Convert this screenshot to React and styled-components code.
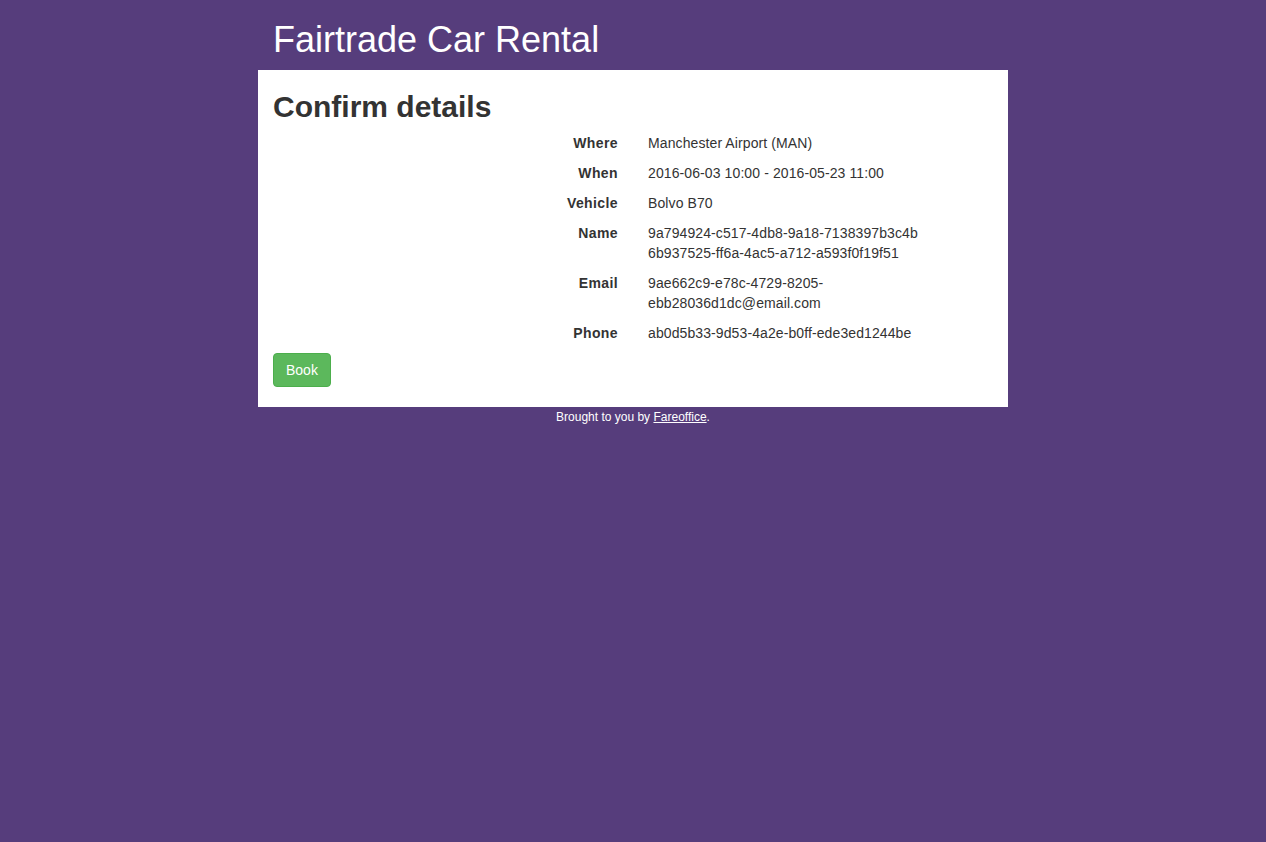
import styled, { createGlobalStyle } from "styled-components";

const GlobalStyle = createGlobalStyle`
  html, body {
    margin: 0;
    padding: 0;
    background-color: #563d7c;
    font-family: "Liberation Sans", Arial, Helvetica, sans-serif;
    font-size: 14px;
    line-height: 1.42857143;
    color: #333;
  }
  * {
    box-sizing: border-box;
  }
`;

const Container = styled.div`
  width: 750px;
  margin: 0 auto;
`;

const Header = styled.header`
  padding: 0 15px;
`;

const SiteTitle = styled.h1`
  margin: 20px 0 10px;
  font-size: 36px;
  font-weight: 400;
  line-height: 1.1;
  color: #fff;
`;

const Panel = styled.main`
  background-color: #fff;
  padding: 0 15px 20px;
`;

const PageTitle = styled.h2`
  margin: 0 0 10px;
  padding-top: 20px;
  font-size: 30px;
  font-weight: 700;
  line-height: 1.1;
  color: #333;
`;

const Details = styled.dl`
  display: grid;
  grid-template-columns: 1fr 1fr;
  column-gap: 30px;
  row-gap: 10px;
  margin: 0 0 10px;
`;

const Term = styled.dt`
  font-weight: 700;
  text-align: right;
  letter-spacing: 0.4px;
`;

const Value = styled.dd`
  margin: 0;
  padding-right: 10px;
  letter-spacing: 0.1px;
  word-wrap: break-word;
`;

const Button = styled.button`
  display: inline-block;
  padding: 6px 12px;
  font-family: inherit;
  font-size: 14px;
  line-height: 1.42857143;
  color: #fff;
  background-color: #5cb85c;
  border: 1px solid #4cae4c;
  border-radius: 4px;
  cursor: pointer;
`;

const Footer = styled.footer`
  text-align: center;
  font-size: 12px;
  line-height: 1.42857143;
  color: #fff;
  padding-top: 2px;
`;

const FooterLink = styled.a`
  color: #fff;
  text-decoration: underline;
`;

const details = [
  ["Where", "Manchester Airport (MAN)"],
  ["When", "2016-06-03 10:00 - 2016-05-23 11:00"],
  ["Vehicle", "Bolvo B70"],
  ["Name", "9a794924-c517-4db8-9a18-7138397b3c4b 6b937525-ff6a-4ac5-a712-a593f0f19f51"],
  ["Email", "9ae662c9-e78c-4729-8205-ebb28036d1dc@email.com"],
  ["Phone", "ab0d5b33-9d53-4a2e-b0ff-ede3ed1244be"],
];

export default function App() {
  return (
    <>
      <GlobalStyle />
      <Container>
        <Header>
          <SiteTitle>Fairtrade Car Rental</SiteTitle>
        </Header>
        <Panel>
          <PageTitle>Confirm details</PageTitle>
          <Details>
            {details.map(([label, value]) => [
              <Term key={label + "-t"}>{label}</Term>,
              <Value key={label + "-v"}>{value}</Value>,
            ])}
          </Details>
          <Button type="submit">Book</Button>
        </Panel>
        <Footer>
          Brought to you by <FooterLink href="#">Fareoffice</FooterLink>.
        </Footer>
      </Container>
    </>
  );
}
